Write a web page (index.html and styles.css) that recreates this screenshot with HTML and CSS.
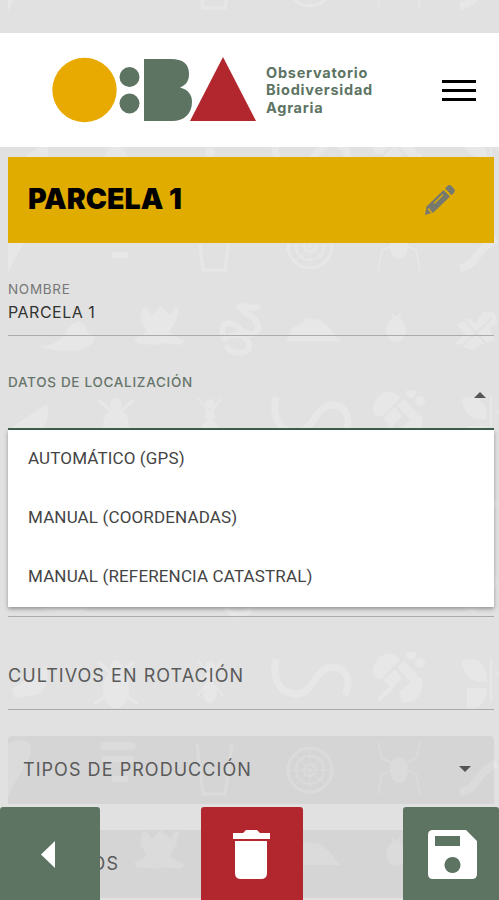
FILE: index.html
```html
<!DOCTYPE html>
<html lang="es">
<head>
<meta charset="UTF-8">
<meta name="viewport" content="width=device-width, initial-scale=1.0">
<link rel="stylesheet" href="styles.css">
<title>Parcela 1</title>
</head>
<body>

<!-- Background pattern -->
<svg class="pattern" width="499" height="900" aria-hidden="true">
  <defs>
    <pattern id="fauna" x="0" y="128" width="540" height="262" patternUnits="userSpaceOnUse">
      <g fill="#e7e7e7">
        <!-- leaf -->
        <path d="M12 37 47 14q4 18-8 28l-24 4z"/>
        <!-- beetle -->
        <ellipse cx="116" cy="37" rx="13" ry="19"/><circle cx="116" cy="14" r="6"/>
        <path d="M98 10l12 10M134 10l-12 10M94 52l12-8M138 52l-12-8" stroke="#e7e7e7" stroke-width="3"/>
        <!-- ant -->
        <circle cx="210" cy="14" r="5"/><circle cx="210" cy="25" r="5"/><ellipse cx="210" cy="40" rx="7" ry="11"/>
        <path d="M198 8l10 13M222 8l-10 13M197 44l10-12M223 44l-10-12" stroke="#e7e7e7" stroke-width="2"/>
        <!-- worm -->
        <path d="M276 7c-4 18 2 33 18 35 20 2 20-26 38-27 14 0 20 14 13 28" fill="none" stroke="#e7e7e7" stroke-width="7"/>
        <!-- bee -->
        <path d="M373 18c2-17 20-21 27-10l-18 18c-6 2-10-2-9-8zM383 28l12-11 7 9-10 11zM397 15l7-6 14 15-7 7zM399 40c8-6 20-19 23-14 2 16-6 26-20 24zM377 46l13-12 3 4-14 12z"/>
        <circle cx="411" cy="3" r="5"/><circle cx="420" cy="11" r="5"/>
        <!-- butterfly -->
        <path d="M462 9c14-6 26 3 25 20-16 3-24-7-25-20zM467 36h20c-1 16-7 22-20 20zM490 6h2v44h-2zM496 22l10-10v16z"/>
        <!-- bird -->
        <path d="M8 92c24-10 26 4 20 16L14 132l-6 14z"/>
        <!-- mite -->
        <rect x="100" y="90" width="36" height="8" rx="4"/><path d="M102 104h32v6h-32zM112 124h16v6h-16z"/>
        <!-- jar -->
        <path d="M197 92l6 50h22l7-50" fill="none" stroke="#e7e7e7" stroke-width="3"/>
        <!-- web -->
        <g fill="none" stroke="#e7e7e7" stroke-width="2">
          <circle cx="310" cy="118" r="22" stroke-width="3"/><circle cx="310" cy="118" r="14"/><circle cx="310" cy="118" r="6"/>
          <path d="M288 118h44M310 96v44M295 103l30 30M325 103l-30 30" stroke-width="1"/>
        </g>
        <!-- spider -->
        <ellipse cx="399" cy="118" rx="9" ry="13"/>
        <path d="M378 90l4 16 12 6M420 90l-4 16-12 6M378 142l4-20 10-4M420 142l-4-20-10-4" fill="none" stroke="#e7e7e7" stroke-width="1.500"/>
        <!-- caterpillar -->
        <path d="M460 140c16-3 14-12 26-22l10-7" fill="none" stroke="#e7e7e7" stroke-width="8"/>
        <!-- slug -->
        <path d="M38 219c18-2 25-7 30-19 8-9 14-8 19 0-2 2-2 4 8 9-4 16-24 16-57 10z"/>
        <!-- frog -->
        <path d="M142 181l4-2 6 8 5-5 4-4 4 4 6 5 4-8 4 1-3 13-7 11 15 9-3 4-14-2-14 2-16-2-3-4 13-7-7-12z"/>
        <!-- snake -->
        <path d="M226 217c4 10 22 10 23 2 1-14-22-16-25-6M223 208c-4-18 12-14 18-6 8 8 18 4 17-5-2-9-14-10-18-18 6-4 10 5 20-1" fill="none" stroke="#e7e7e7" stroke-width="6"/>
        <!-- mound -->
        <path d="M286 213l6-13 9-5 6-5 13 2 9 7 8 11 4 3z"/>
        <!-- apple -->
        <ellipse cx="396" cy="202" rx="10" ry="12"/><path d="M394 192l-3-8 6 5 5-6-3 9z"/>
        <!-- ladybug -->
        <path d="M455 215l10-9-8-10 13-6 5 6 8-12q15-4 14 12l-8 4 6 12-15 5-6 6z"/>
        <path d="M462 218l30-28M464 192l26 28" stroke="#e1e1e1" stroke-width="2"/>
      </g>
    </pattern>
  </defs>
  <rect width="499" height="900" fill="#e1e1e1"/>
  <rect width="499" height="900" fill="url(#fauna)"/>
</svg>

<header class="header">
  <svg class="logo" width="204" height="66" viewBox="0 0 204 66">
    <circle cx="32.5" cy="33" r="32.2" fill="#e8a900"/>
    <circle cx="77.5" cy="20" r="10" fill="#5d7463"/>
    <circle cx="77.5" cy="46.5" r="10" fill="#5d7463"/>
    <path d="M92 2h27c12 0 18 5 18 15 0 7-3 11-9 13.500 8 2 12 7 12 14.500 0 12-8 19-20 19H92z" fill="#5d7463"/>
    <path d="M171 0l33 64h-66z" fill="#b1272d"/>
  </svg>
  <div class="brand">Observatorio<br>Biodiversidad<br>Agraria</div>
  <div class="menu-icon"><span></span><span></span><span></span></div>
</header>

<main class="content">
  <div class="title-bar">
    <h1 class="title">PARCELA 1</h1>
    <svg class="edit" width="32" height="32" viewBox="0 0 32 32">
      <path d="M21 4.500l2.500-2.700q2-1.500 4 .2l2.800 3q1.300 2-.2 3.700l-2.600 2.600z" fill="#76796d"/>
      <path d="M19.500 6l6.500 6.600L9.500 28.500 1 31l1.500-8.500z" fill="#76796d"/>
      <path d="M10 19.500l9-8.700M3.800 25l1.800.5.400 2.200 2.200.6" fill="none" stroke="#e0ac00" stroke-width="1.300"/>
    </svg>
  </div>

  <div class="field">
    <label class="label">NOMBRE</label>
    <div class="value">PARCELA 1</div>
  </div>

  <div class="field open">
    <label class="label label-active">DATOS DE LOCALIZACIÓN</label>
    <i class="arrow up"></i>
    <ul class="dropdown">
      <li>AUTOMÁTICO (GPS)</li>
      <li>MANUAL (COORDENADAS)</li>
      <li>MANUAL (REFERENCIA CATASTRAL)</li>
    </ul>
  </div>

  <div class="field covered"></div>

  <div class="field single">
    <label class="placeholder">CULTIVOS EN ROTACIÓN</label>
  </div>

  <div class="select">
    <span class="placeholder">TIPOS DE PRODUCCIÓN</span>
    <i class="arrow down"></i>
  </div>
  <div class="select">
    <span class="placeholder">MANEJOS</span>
  </div>
</main>

<!-- Bottom actions -->
<footer class="actions">
  <button class="btn back">
    <svg width="14" height="28" viewBox="0 0 14 28"><path d="M14 0v27L0 13.500z" fill="#fff"/></svg>
  </button>
  <button class="btn delete">
    <svg width="40" height="50" viewBox="0 0 40 50">
      <path d="M1 3h10l3-3h11l3 3h10v6H1zM3 11h32v32q0 6-6 6H9q-6 0-6-6z" fill="#fff"/>
    </svg>
  </button>
  <button class="btn save">
    <svg width="50" height="50" viewBox="0 0 50 50">
      <path fill-rule="evenodd" d="M5 0h33l11 11v33q0 5-5 5H5q-5 0-5-5V5q0-5 5-5zM7 6v10h25V6zM24.500 27a8 8 0 1 0 .01 0z" fill="#fff"/>
    </svg>
  </button>
</footer>

</body>
</html>
```
FILE: styles.css
```css
* {
  box-sizing: border-box;
}

body {
  margin: 0;
  padding-top: 33px;
  height: 900px;
  overflow: hidden;
  background: #e1e1e1;
  font-family: Inter, "Open Sans", sans-serif;
  color: #333;
}

.pattern {
  position: absolute;
  top: 0;
  left: 0;
  z-index: -1;
}

/* Header */
.header {
  display: flex;
  align-items: center;
  height: 114px;
  padding: 0 23px 0 52px;
  background: #fff;
}

.brand {
  margin-left: 10px;
  color: #5d7463;
  font-size: 14.5px;
  font-weight: 700;
  line-height: 17.3px;
  letter-spacing: 0.75px;
}

.menu-icon {
  display: flex;
  flex-direction: column;
  gap: 6px;
  width: 34px;
  margin-left: auto;
}

.menu-icon span {
  height: 3px;
  background: #000;
}

.content {
  padding: 10px 5px 0 8px;
}

.title-bar {
  display: flex;
  align-items: center;
  justify-content: space-between;
  height: 86px;
  padding: 0 38px 0 20px;
  background: #e0ac00;
}

.title {
  margin: 0;
  padding-bottom: 3px;
  color: #000;
  font-size: 28.5px;
  font-weight: 900;
  white-space: nowrap;
}

/* Form fields */
.field {
  position: relative;
  height: 93px;
  padding-top: 36px;
  border-bottom: 1px solid #ababab;
}

.label {
  display: block;
  height: 20px;
  line-height: 20px;
  font-size: 13.5px;
  letter-spacing: 0.7px;
  color: #777;
}

.label-active {
  color: #66756b;
  font-weight: 500;
}

.value {
  height: 26px;
  line-height: 26px;
  font-size: 16px;
  letter-spacing: 0.5px;
}

.field.open {
  height: 94px;
  border-bottom: 2px solid #3f604d;
}

.field.covered {
  height: 187px;
}

.field.single {
  display: flex;
  align-items: center;
  padding-top: 25px;
}

.placeholder {
  font-size: 18px;
  letter-spacing: 1.05px;
  color: #5a5a5a;
  white-space: nowrap;
}

.arrow {
  border-left: 6px solid transparent;
  border-right: 6px solid transparent;
}

.arrow.up {
  position: absolute;
  top: 56px;
  right: 8px;
  border-bottom: 6px solid #555;
}

.arrow.down {
  border-top: 6px solid #555;
}

.dropdown {
  position: absolute;
  top: 94px;
  left: 0;
  right: 0;
  z-index: 2;
  height: 177px;
  margin: 0;
  padding: 0;
  list-style: none;
  background: #fff;
  box-shadow: 0 2px 4px rgba(0, 0, 0, 0.35);
  font-family: Roboto, sans-serif;
  font-size: 17px;
  letter-spacing: 0.14px;
  color: #444;
}

.dropdown li {
  height: 59px;
  padding-left: 20px;
  line-height: 57px;
}

.select {
  display: flex;
  align-items: center;
  justify-content: space-between;
  height: 68px;
  margin-top: 26px;
  padding: 0 23px 2px 15px;
  border-radius: 4px 4px 0 0;
  background: rgba(0, 0, 0, 0.05);
}

/* Bottom actions */
.actions {
  position: fixed;
  left: 0;
  right: 0;
  bottom: 0;
  display: flex;
  justify-content: space-between;
  height: 93px;
}

.btn {
  display: flex;
  align-items: center;
  justify-content: center;
  width: 100px;
  padding: 2px 0 0;
  border: 0;
  border-radius: 3px 3px 0 0;
  background: #5d7463;
}

.btn.back {
  padding-right: 4px;
}

.btn.delete {
  width: 102px;
  background: #b1272d;
}

.btn.save {
  width: 96px;
  padding-left: 4px;
}
```
